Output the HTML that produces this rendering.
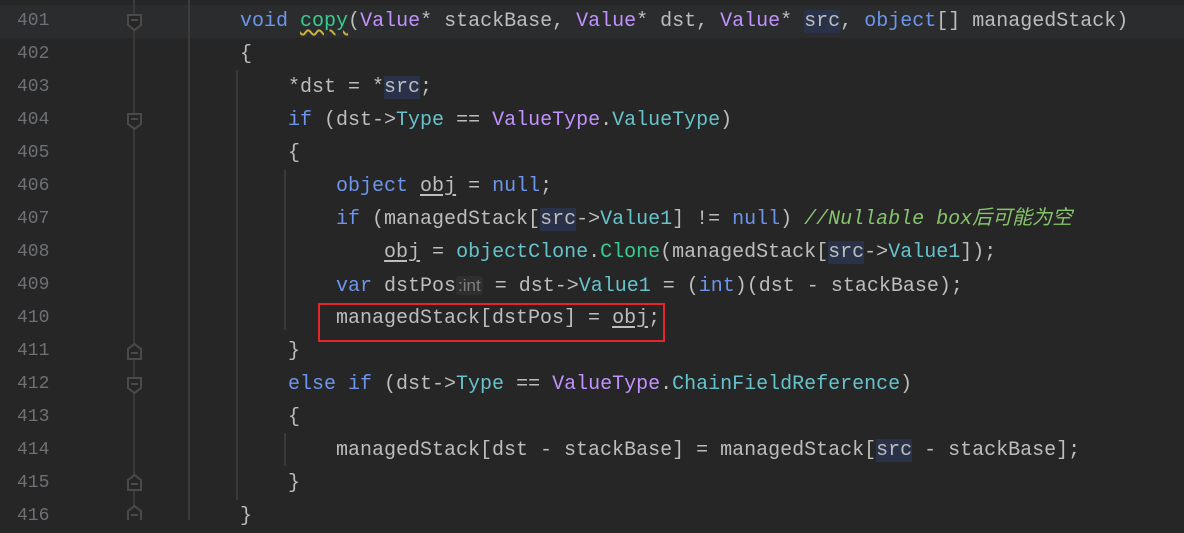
<!DOCTYPE html><html><head><style>
body{margin:0;width:1184px;height:520px;overflow:hidden;background:#262626;font-family:"Liberation Mono","Noto Sans CJK SC",monospace;}
.row{position:absolute;left:0;width:1184px;height:33px;line-height:33px;font-size:20px;color:#bdbdbd;white-space:pre}
.ln{position:absolute;left:17px;font-size:18px;color:#6e7074}
.c{position:absolute;left:240px}
.k{color:#6c95eb}.m{color:#39cc8f}.t{color:#c191ff}.p{color:#66c3cc}.cm{color:#85c46c;font-style:italic}
.hl{background:#293249}
.u{text-decoration:underline;text-underline-offset:3px}
.vl{position:absolute;width:2px;background:#3a3a3a}
.fold{position:absolute;left:127px;width:14px;height:16px}
.hint{font-family:"Liberation Sans",sans-serif;font-size:17px;color:#808080;background:#2f2f2f;border-radius:3px;padding:0 2px}
</style></head><body>
<div style="position:absolute;left:0;top:5px;width:1184px;height:33px;background:#2b2c2e"></div>
<div class="vl" style="left:133px;top:0;height:520px;background:#3a3a3a"></div>
<div class="vl" style="left:188px;top:0;height:520px;background:#3c3c3c"></div>
<div class="vl" style="left:236px;top:70px;height:430px"></div>
<div class="vl" style="left:284px;top:170px;height:160px"></div>
<div class="vl" style="left:284px;top:433px;height:33px"></div>
<div class="vl" style="left:236px;top:0;height:0"></div>
<svg style="position:absolute;left:0;top:0" width="180" height="520">
<g fill="#262626" stroke="#4a4a4a" stroke-width="2">
<path d="M128 15h13v10l-6.5 5-6.5-5z"/><path d="M128 114h13v10l-6.5 5-6.5-5z"/>
<path d="M128 359h13v-10l-6.5-5-6.5 5z"/><path d="M128 378h13v10l-6.5 5-6.5-5z"/>
<path d="M128 490h13v-10l-6.5-5-6.5 5z"/><path d="M128 521h13v-10l-6.5-5-6.5 5z"/>
</g><g stroke="#4a4a4a" stroke-width="2"><path d="M131 20h7M131 119h7M131 353h7M131 384h7M131 484h7M131 515h7"/></g></svg>
<div class="row" style="top:5px"><span class="ln">401</span><span class="c"><span class="k">void</span> <span class="m u" style="text-decoration-style:wavy;text-decoration-color:#c9b43a">copy</span>(<span class="t">Value</span>* stackBase, <span class="t">Value</span>* dst, <span class="t">Value</span>* <span class="hl">src</span>, <span class="k">object</span>[] managedStack)</span></div>
<div class="row" style="top:38px"><span class="ln">402</span><span class="c">{</span></div>
<div class="row" style="top:71px"><span class="ln">403</span><span class="c">    *dst = *<span class="hl">src</span>;</span></div>
<div class="row" style="top:104px"><span class="ln">404</span><span class="c">    <span class="k">if</span> (dst-&gt;<span class="p">Type</span> == <span class="t">ValueType</span>.<span class="p">ValueType</span>)</span></div>
<div class="row" style="top:137px"><span class="ln">405</span><span class="c">    {</span></div>
<div class="row" style="top:170px"><span class="ln">406</span><span class="c">        <span class="k">object</span> <span class="u">obj</span> = <span class="k">null</span>;</span></div>
<div class="row" style="top:203px"><span class="ln">407</span><span class="c">        <span class="k">if</span> (managedStack[<span class="hl">src</span>-&gt;<span class="p">Value1</span>] != <span class="k">null</span>) <span class="cm">//Nullable box后可能为空</span></span></div>
<div class="row" style="top:236px"><span class="ln">408</span><span class="c">            <span class="u">obj</span> = <span class="p">objectClone</span>.<span class="m">Clone</span>(managedStack[<span class="hl">src</span>-&gt;<span class="p">Value1</span>]);</span></div>
<div class="row" style="top:269px"><span class="ln">409</span><span class="c">        <span class="k">var</span> dstPos<span class="hint">:int</span> = dst-&gt;<span class="p">Value1</span> = (<span class="k">int</span>)(dst - stackBase);</span></div>
<div class="row" style="top:302px"><span class="ln">410</span><span class="c">        managedStack[dstPos] = <span class="u">obj</span>;</span></div>
<div class="row" style="top:335px"><span class="ln">411</span><span class="c">    }</span></div>
<div class="row" style="top:368px"><span class="ln">412</span><span class="c">    <span class="k">else if</span> (dst-&gt;<span class="p">Type</span> == <span class="t">ValueType</span>.<span class="p">ChainFieldReference</span>)</span></div>
<div class="row" style="top:401px"><span class="ln">413</span><span class="c">    {</span></div>
<div class="row" style="top:434px"><span class="ln">414</span><span class="c">        managedStack[dst - stackBase] = managedStack[<span class="hl">src</span> - stackBase];</span></div>
<div class="row" style="top:467px"><span class="ln">415</span><span class="c">    }</span></div>
<div class="row" style="top:500px"><span class="ln">416</span><span class="c">}</span></div>
<div style="position:absolute;left:318px;top:303px;width:343px;height:35px;border:2px solid #e8242b"></div>
</body></html>
